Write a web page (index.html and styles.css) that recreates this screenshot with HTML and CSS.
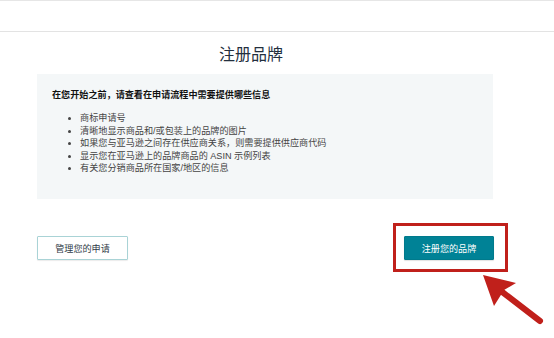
FILE: index.html
```html
<!DOCTYPE html>
<html lang="zh-CN">
<head>
<meta charset="utf-8">
<title>注册品牌</title>
<link rel="stylesheet" href="styles.css">
</head>
<body>
<header class="topbar"></header>
<main class="content">
  <h1 class="title">注册品牌</h1>
  <section class="info">
    <p class="info-head">在您开始之前，请查看在申请流程中需要提供哪些信息</p>
    <ul class="info-list">
      <li>商标申请号</li>
      <li>清晰地显示商品和/或包装上的品牌的图片</li>
      <li>如果您与亚马逊之间存在供应商关系，则需要提供供应商代码</li>
      <li>显示您在亚马逊上的品牌商品的 ASIN 示例列表</li>
      <li>有关您分销商品所在国家/地区的信息</li>
    </ul>
  </section>
  <div class="actions">
    <button class="btn btn-secondary">管理您的申请</button>
    <div class="primary-wrap">
      <button class="btn btn-primary">注册您的品牌</button>
      <span class="highlight"></span>
    </div>
  </div>
</main>
<svg class="arrow" viewBox="460 255 94 83" width="94" height="83">
  <line x1="501" y1="291" x2="540" y2="321" stroke="#c0201b" stroke-width="6" stroke-linecap="round"/>
  <polygon points="483,275 516,283 504,290 494,306" fill="#c0201b"/>
</svg>
</body>
</html>
```
FILE: styles.css
```css
* { box-sizing: border-box; }
html, body { margin: 0; padding: 0; background: #fff; }
body {
  font-family: "Liberation Sans", "Noto Sans CJK SC", sans-serif;
  width: 554px;
  height: 338px;
  position: relative;
  overflow: hidden;
}
.topbar {
  height: 32px;
  border-top: 1px solid #e6e6e6;
  border-bottom: 1px solid #e3e3e3;
}
.content {
  padding: 0 61px 0 37px;
}
.title {
  margin: 12px 0 8px;
  padding-right: 28px;
  text-align: center;
  font-size: 16px;
  line-height: 22px;
  font-weight: 400;
  color: #232f3e;
}
.info {
  height: 125px;
  background: #f4f7f8;
  padding: 15px 15px 0 15px;
}
.info-head {
  margin: 0;
  font-size: 9.1px;
  line-height: 12px;
  font-weight: 700;
  color: #111;
}
.info-list {
  margin: 11px 0 0;
  padding-left: 28px;
  font-size: 9.15px;
  line-height: 12.5px;
  color: #444;
}
.actions {
  margin-top: 37px;
  margin-right: -1px;
  display: flex;
  justify-content: space-between;
  align-items: flex-start;
}
.btn {
  height: 24px;
  font-family: inherit;
  font-size: 9.1px;
  padding: 0;
  cursor: pointer;
  border-radius: 1px;
}
.btn-secondary {
  width: 91px;
  background: #fff;
  color: #2f3b47;
  border: 1px solid #a9d3d6;
  box-shadow: 0 1px 1px rgba(0,0,0,0.08);
}
.primary-wrap {
  position: relative;
}
.btn-primary {
  display: block;
  width: 90px;
  background: #008296;
  color: #fff;
  border: 1px solid #007a8c;
  box-shadow: 0 1px 1px rgba(0,0,0,0.12);
}
.highlight {
  position: absolute;
  left: -11px;
  right: -14px;
  top: -13px;
  bottom: -12px;
  border: 3px solid #c0201b;
  pointer-events: none;
}
.arrow {
  position: absolute;
  left: 460px;
  top: 255px;
}
```
